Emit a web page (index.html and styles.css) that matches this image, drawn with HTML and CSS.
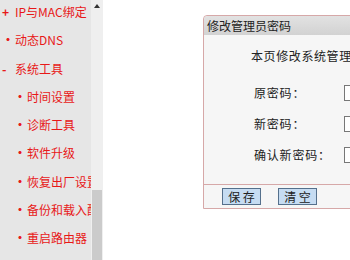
FILE: index.html
```html
<!DOCTYPE html>
<html lang="zh-CN">
<head>
  <meta charset="UTF-8" />
  <title>修改管理员密码</title>
  <link rel="stylesheet" href="styles.css">
</head>
<body>
  <div class="menu">
    <ul class="menu-list">
      <li class="top"><span class="mark">+</span>IP与MAC绑定</li>
      <li class="top"><span class="mark">•</span>动态DNS</li>
      <li class="top"><span class="mark">-</span>系统工具</li>
      <li class="sub"><span class="mark">•</span>时间设置</li>
      <li class="sub"><span class="mark">•</span>诊断工具</li>
      <li class="sub"><span class="mark">•</span>软件升级</li>
      <li class="sub"><span class="mark">•</span>恢复出厂设置</li>
      <li class="sub"><span class="mark">•</span>备份和载入配置</li>
      <li class="sub"><span class="mark">•</span>重启路由器</li>
      <li class="sub"><span class="mark">•</span>修改登录口令</li>
    </ul>
  </div>
  <div class="scrollbar">
    <div class="arrow"></div>
    <div class="thumb"></div>
  </div>
  <div class="main">
    <div class="panel">
      <div class="panel-title">修改管理员密码</div>
      <div class="panel-body">
        <p class="intro">本页修改系统管理员的用户名及密码，用户名及密码长度不能超过14个字节。</p>
        <div class="row"><label>原密码：</label><input type="password"></div>
        <div class="row"><label>新密码：</label><input type="password"></div>
        <div class="row"><label>确认新密码：</label><input type="password"></div>
      </div>
      <div class="panel-foot">
        <button>保 存</button>
        <button>清 空</button>
      </div>
    </div>
  </div>
</body>
</html>
```

FILE: styles.css
```css
body {
  margin: 0;
  font-family: "Noto Sans CJK SC", "DejaVu Sans", sans-serif;
  font-size: 12px;
  display: flex;
  height: 260px;
  overflow: hidden;
  background-color: #fff;
}
.menu {
  width: 91px;
  flex: none;
  background-color: #e6e6e6;
  overflow: hidden;
  white-space: nowrap;
}
.menu-list {
  list-style: none;
  margin: -2px 0 0 0;
  padding: 0;
}
.menu-list li {
  height: 28.3px;
  line-height: 28.3px;
  color: #e81818;
}
.menu-list .mark {
  display: inline-block;
  width: 13px;
  font-weight: bold;
}
.menu-list .top {
  padding-left: 2px;
}
.menu-list .sub {
  padding-left: 14px;
}
.scrollbar {
  width: 12px;
  flex: none;
  background-color: #efefef;
  display: flex;
  flex-direction: column;
  justify-content: space-between;
  align-items: center;
}
.arrow {
  margin-top: 4px;
  width: 0;
  height: 0;
  border-left: 3px solid transparent;
  border-right: 3px solid transparent;
  border-bottom: 4px solid #333;
}
.thumb {
  width: 10px;
  height: 70px;
  background-color: #cbcbcb;
}
.main {
  padding: 15px 0 0 100px;
}
.panel {
  width: 420px;
  border: 1px solid #d6a8a8;
  border-radius: 4px 0 0 0;
  background-color: #f6f6f6;
}
.panel-title {
  height: 19px;
  line-height: 19px;
  padding-left: 3px;
  color: #222;
  background: linear-gradient(#e2e2e2, #d2d2d2);
  border-radius: 4px 0 0 0;
}
.panel-body {
  padding: 12px 0 14px 47px;
  color: #222;
}
.intro {
  margin: 0 0 13px 0;
  white-space: nowrap;
  letter-spacing: 0.6px;
}
.row {
  display: flex;
  align-items: center;
  height: 31px;
}
.row label {
  width: 90px;
  padding-left: 3px;
  letter-spacing: 0.8px;
}
.row input {
  width: 150px;
  height: 14px;
  border: 1px solid #777;
  padding: 0;
  margin: 0;
  background-color: #fff;
}
.panel-foot {
  border-top: 1px solid #d6a8a8;
  padding: 3px 0 3px 18px;
  display: flex;
  gap: 17px;
}
.panel-foot button {
  width: 39px;
  height: 17px;
  padding: 0;
  font-family: inherit;
  font-size: 12px;
  line-height: 15px;
  color: #222;
  background-color: #c6dcf2;
  border: 1px solid #55708c;
  border-radius: 0;
}
```
